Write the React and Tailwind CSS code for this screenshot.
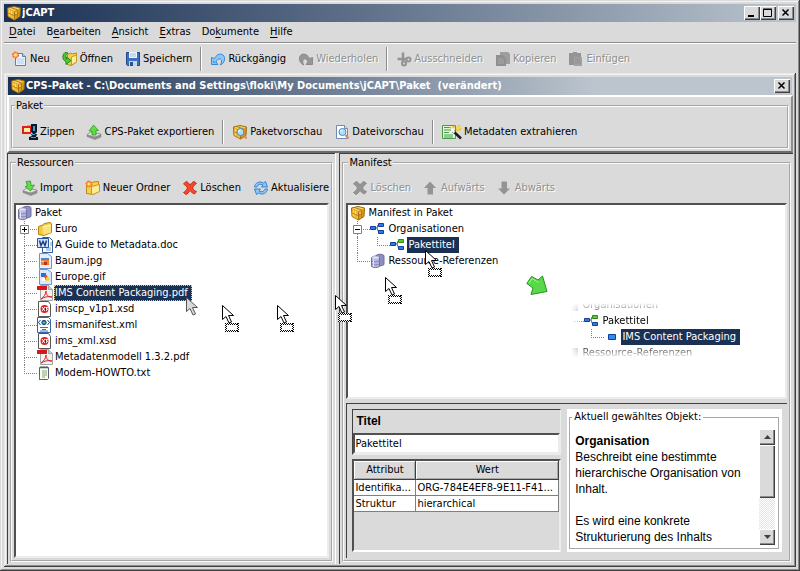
import clsx from "clsx";

/* ---------- icons ---------- */

function Icon({ children, w = 16, className }) {
  return (
    <svg
      width={w}
      height="16"
      viewBox={`0 0 ${w} 16`}
      aria-hidden="true"
      className={clsx("shrink-0", className)}
    >
      {children}
    </svg>
  );
}

function PackageShape() {
  return (
    <>
      <path d="M1.500 3 8 1.500 14.500 3 14 11.500 8.500 15 2 11.500z" fill="#dd9c18" stroke="#9a6a10" />
      <path d="M2 3.500 8 2l6 1.500L8.500 6z" fill="#f5d165" />
      <path d="M2 4 8 6.500v8L2.500 11.500z" fill="#edb93a" />
      <path d="M5 2.500 11.500 5v7.500" fill="none" stroke="#b17c14" />
      <path d="M2.500 8 8 10.500 14 8" fill="none" stroke="#b9831a" />
      <path d="M3.500 5.500v2M5.500 6v3M3.500 9.500v1.500M10 7v2" stroke="#fbe08a" />
      <path d="M8.500 6.500v8" stroke="#a8740e" />
    </>
  );
}

function Lens() {
  return (
    <>
      <circle cx="8.500" cy="8" r="3.500" fill="#a8e0f8" stroke="#5586b4" />
      <path d="M6.500 8a2 2 0 0 1 2-2" stroke="#fff" fill="none" />
      <path d="m11.500 11 3 3.500" stroke="#ee8148" strokeWidth="2" />
    </>
  );
}

function PageShape({ stroke = "#6f8ab8" }) {
  return (
    <>
      <path d="M2.500 1.500h8l3 3v10h-11z" fill="#fff" stroke={stroke} />
      <path d="M10.500 1.500v3h3" fill="#dbe6f5" stroke={stroke} />
    </>
  );
}

const PackageIcon = () => <Icon><PackageShape /></Icon>;

const NewIcon = () => (
  <Icon>
    <path d="M3.500 2.500h7l3 3v9h-10z" fill="#e9f1fc" stroke="#6480a8" />
    <path d="M10.500 2.500v3h3" fill="#b7cdea" stroke="#6480a8" />
    <path d="M5 8h7M5 10h7M5 12h7" stroke="#b8cdea" />
    <circle cx="3.500" cy="4" r="3" fill="#ff9a4a" stroke="#e8553a" strokeDasharray="2 1" />
    <circle cx="3.500" cy="4" r="1.500" fill="#ffec6a" />
  </Icon>
);

const OpenIcon = () => (
  <Icon>
    <path d="M5.500 3.500 9 2l1 1 4.500-1v9l-5 3.500-4-1z" fill="#f4d052" stroke="#b98b1a" />
    <path d="m9.500 6 5-2v7l-5 3z" fill="#fcef9c" stroke="#c49a26" />
    <path d="M3 1.500C0 4 0 9 4 10.500v3L9 9.500 4.500 6v2C3 7 3 4 6 2z" fill="#52c932" stroke="#258512" />
  </Icon>
);

const SaveIcon = () => (
  <Icon>
    <path d="M1.500 1.500h13v13h-12l-1-1z" fill="#3c6fbe" stroke="#23498a" />
    <path d="M4 1h8v6H4z" fill="#eef4fc" />
    <path d="M5 3h6M5 5h6" stroke="#a3bddf" />
    <path d="M4 10h8v5H4z" fill="#c9d6e8" />
    <path d="M5 11h3v4H5z" fill="#2a4f8f" />
  </Icon>
);

const UndoIcon = () => (
  <Icon>
    <path
      d="M1.500 6.500v7h6.500l-2-2.500c1-3 3.500-4 5-2.500 1 1 .5 3.500-.5 5.500 3-1.500 4.500-4.500 4-7.500C13.500 2.500 8 1 4.500 7.500z"
      fill="#8fc6f8"
      stroke="#3a86d2"
      strokeLinejoin="round"
    />
    <path d="M3 9v3h3z" fill="#4f9be6" />
  </Icon>
);

const RedoIcon = () => (
  <Icon>
    <path
      d="M14.500 6.500v7H8L10 11C9 8 6.500 7 5.500 8.500c-1 1-1 3 0 5.500-3-1.500-4.500-4.500-4-7.500C2.500 2.500 8 1 11.500 7.500z"
      fill="#969696"
      stroke="#8a8a8a"
      strokeLinejoin="round"
    />
  </Icon>
);

const CutIcon = () => (
  <Icon>
    <path d="M7 1.500V11M1.500 8H10" stroke="#949494" strokeWidth="2.500" />
    <circle cx="8" cy="12.500" r="2" fill="none" stroke="#949494" strokeWidth="2" />
    <circle cx="12.500" cy="8.500" r="2" fill="none" stroke="#949494" strokeWidth="2" />
  </Icon>
);

const CopyIcon = () => (
  <Icon>
    <path d="M5 1h8l2 2v10H5z" fill="#9e9e9e" />
    <path d="M1 4h7l3 3v8H1z" fill="#909090" />
    <path d="M3 8h5M3 10h6M3 12h6" stroke="#a8a8a8" />
  </Icon>
);

const PasteIcon = () => (
  <Icon>
    <path d="M1 2h4V1h4v1h4v12H1z" fill="#949494" />
    <path d="M6 6h8v9H6z" fill="#a2a2a2" />
    <path d="M7 8h5M7 10h6M7 12h6" stroke="#909090" />
  </Icon>
);

const ZipIcon = () => (
  <Icon>
    <path d="M5 1h10v6H5z" fill="#ff9d1c" />
    <path d="M0 2h9v8H0z" fill="#e31e1e" />
    <path d="M2 4h6v4H2z" fill="#fff29a" />
    <path d="M9 0h6v8l-2 2h2l-1 3h2v3H7v-3l3-1-1-2h2l-2-2z" fill="#101828" />
    <path d="M11 2h2v5h-2zM10 10h3v1h-3zM9 13h5v1H9z" fill="#3aa0d8" />
  </Icon>
);

function Tray() {
  return (
    <>
      <path d="M1 10.500 5 8l10 2v3l-6 2.500-8-3z" fill="#8f8f8f" stroke="#777" strokeWidth=".5" />
      <path d="m1.500 10.500 3.500-2 9.500 2-6 2z" fill="#e2e2e2" />
    </>
  );
}

const ExportIcon = () => (
  <Icon>
    <Tray />
    <path d="m7.500 1 5 5.500H10V11H6V7H3z" fill="#5fdc46" stroke="#2f9c25" strokeWidth=".8" />
  </Icon>
);

const ImportIcon = () => (
  <Icon>
    <Tray />
    <path d="m4 1.500 4.500-.5.5 4.500 3.500-.5L8.500 11 3 6.500l2.500-.5z" fill="#5fdc46" stroke="#2f9c25" strokeWidth=".8" />
  </Icon>
);

const PackageSearchIcon = () => <Icon><PackageShape /><Lens /></Icon>;
const FileSearchIcon = () => <Icon><PageShape /><Lens /></Icon>;

const MetadataIcon = () => (
  <Icon w={20}>
    <path d="M.5 1.500h13v13H.5z" fill="#e3f5dd" stroke="#4a9a4a" />
    <path d="M2 3.500h7M2 6h7M2 8.500h5M2 11h9M2 13h9" stroke="#3f9c44" />
    <path d="m11 7 8 7.500" stroke="#1b1b1b" strokeWidth="2.500" />
    <path d="m9.500 5.500 3 3" stroke="#fff" strokeWidth="2" />
    <path d="m8 3 1 1M16 1.500l2 2M14 6l5-1M11 2l1 2" stroke="#f0bf18" strokeWidth="2" />
    <circle cx="16" cy="4" r="2" fill="#fadb3b" />
  </Icon>
);

function FolderShape() {
  return (
    <>
      <path d="M1.500 5 6 4l2-2 5.500-.5v9l-5 4-7-1z" fill="#f6cf52" stroke="#bd8a14" />
      <path d="m6.500 6.500 8-2v7l-6.500 3-1.500-1z" fill="#fdeb95" stroke="#c8971c" />
    </>
  );
}

const FolderIcon = () => (
  <Icon>
    <path d="M1.500 5.500 6 4l1-1.500 6-1 1.500 1v9L7 14.500l-5.500-1z" fill="#f3c73e" stroke="#b58412" />
    <path d="m5.500 5 8.500-2v8.500L6 14z" fill="#fbe279" />
    <path d="m6 6 8-2" stroke="#fff6c4" />
  </Icon>
);

const NewFolderIcon = () => (
  <Icon>
    <FolderShape />
    <circle cx="4" cy="4" r="3" fill="#ff9a3a" stroke="#f0692e" strokeDasharray="2 1" />
    <circle cx="4" cy="4" r="1.300" fill="#fff07a" />
  </Icon>
);

function CrossIcon({ fill, stroke }) {
  return (
    <Icon>
      <path
        d="M4 1.500c1.500 0 3 2 4 3.500 1-1.500 2.500-3 4-3.500l2.500 2c-1.500 1-3 2.500-4 4.500 1 2 2.500 3 4 3.500L12.500 14c-1.500-.5-3-1.500-4.500-3.500-1.500 2-2.500 3.500-4 4L1.500 12.500C3 11.500 4.500 10 5.500 8 4.500 6 3 5 1.500 4z"
        fill={fill}
        stroke={stroke}
      />
    </Icon>
  );
}

const RefreshIcon = () => (
  <Icon>
    <path d="M1.500 7C2 3 6 .5 10.500 3L12.500 1.500 14.500 7H8.500L10 5C7 3.500 5 4.500 4 7z" fill="#8ec5f8" stroke="#3583d4" />
    <path d="M14.500 9c-.5 4-4.500 6.500-9 4l-2 1.500L1.500 9h6L6 11c3 1.500 5 .5 6-2z" fill="#8ec5f8" stroke="#3583d4" />
  </Icon>
);

const ArrowUpIcon = () => (
  <Icon>
    <path d="m7 1.500 6 6.500h-3v6.500H4.500V8H1z" fill="#949494" />
  </Icon>
);

const ArrowDownIcon = () => (
  <Icon>
    <path d="M7 14.500 1 8.500h3.500V1.500H10v7h3z" fill="#949494" />
  </Icon>
);

const DatabaseIcon = () => (
  <Icon>
    <path d="M6 2.500C8 .8 12.500.8 14 2.500v9c-2 1.500-5.500 2-8 1z" fill="#8e8ec2" stroke="#6c6ca4" />
    <path d="M1.500 4.500c2-2 6.500-2 8 0v9c-2 1.500-6 1.500-8 0z" fill="#b9b9de" stroke="#7070a8" />
    <ellipse cx="5.500" cy="4.500" rx="3.500" ry="1.200" fill="#dedef4" />
    <path d="M2 8c2 1.200 5 1.200 7 0M2 11c2 1.200 5 1.200 7 0" fill="none" stroke="#8080b4" />
    <path d="M3.500 6.500v7" stroke="#e6e6fa" />
  </Icon>
);

const WordIcon = () => (
  <Icon>
    <path d="M5.500.5h7l3 3v12h-10z" fill="#fff" stroke="#2f5da0" />
    <path d="M9 11h5M9 13h5M13 6h2M13 8h2" stroke="#6f97cf" />
    <path d="M.5 1.500h11v9H.5z" fill="#d4e2f6" stroke="#2a569c" />
    <path d="m2.500 3.500 1.500 5 2-4 2 4 1.500-5" fill="none" stroke="#173f88" strokeWidth="1.500" />
  </Icon>
);

const JpgIcon = () => (
  <Icon>
    <path d="M2.500.5h8l4 3v12h-12z" fill="#e6effb" stroke="#6b93cc" />
    <path d="M4 5h8v7H4z" fill="#f08232" />
    <path d="M4 5h8v2H4z" fill="#4a88cf" />
    <path d="M7 9h3v3H7z" fill="#b83418" />
    <path d="M4 8h3v1H4z" fill="#ffd064" />
  </Icon>
);

const GifIcon = () => (
  <Icon>
    <path d="M2.500.5h8l4 3v12h-12z" fill="#dbe9fb" stroke="#6b93cc" />
    <path d="M4 4h5v4H4z" fill="#276fe0" />
    <path d="m7 7 3-1 1 4-3 1z" fill="#ef4632" />
    <circle cx="10.500" cy="10" r="2" fill="#f3cf2c" />
    <path d="M5 9h3v3H5z" fill="#fff" />
  </Icon>
);

const PdfIcon = () => (
  <Icon>
    <path d="M3.500.5h8l4 4v11h-12z" fill="#f1f1f1" stroke="#a4a4a4" />
    <path d="M11.500.5v4h4" fill="#ccc" stroke="#a4a4a4" />
    <path d="M0 1h10v4H0z" fill="#d8141c" />
    <path d="M4 14c3-2 5-5 5-8 0 4 2 6 6 6-4-1-8 0-11 2z" fill="none" stroke="#dd2020" />
  </Icon>
);

const XsdIcon = () => (
  <Icon>
    <path d="M1.500.5h10l2 3v12h-12z" fill="#fff" stroke="#555" />
    <circle cx="7.500" cy="8" r="4" fill="#df2424" />
    <path d="m5 6 3 4M5 10l3-4M8.500 6.500h2L9 8h1.500L9 10" fill="none" stroke="#fff" />
    <path d="M8 7.500h1v2H8z" fill="#222" />
  </Icon>
);

const XmlIcon = () => (
  <Icon>
    <path d="M.5.5h11l2 2v13H.5z" fill="#fff" stroke="#36679f" />
    <path d="M3.500 3 1.500 5.500l2 2.500M10.500 3l2 2.500-2 2.500" fill="none" stroke="#184488" />
    <circle cx="7" cy="5.500" r="2.200" fill="#2f80d0" stroke="#154a88" />
    <path d="M6 5h2v1H6z" fill="#6cc35a" />
    <path d="M3 10.500h8M5 12.500h4M3 14h8" stroke="#4a6ea8" />
  </Icon>
);

const TxtIcon = () => (
  <Icon>
    <path d="M2.500 2.500h9v11l-1 1h-8z" fill="#f7fbf2" stroke="#56606e" />
    <path d="M4 1v2.500M6 1v2.500M8 1v2.500M10 1v2.500" stroke="#4b5563" />
    <path d="M5 6h5M5 8h5M5 10h5M5 12h3" stroke="#86a86a" />
    <path d="M2.500 10v4.500H6" fill="none" stroke="#4472b8" />
  </Icon>
);

function OrgIcon({ top = "#2f7bec", edge = "#123f9c" }) {
  return (
    <Icon>
      <path d="M5 7h2.500M10 4H8L7 7l1.500 4H10" fill="none" stroke="#666" />
      <path d="M.5 5.500h5v3h-5z" fill="#2f7bec" stroke="#123f9c" />
      <path d="M8.500 2.500h5v3h-5z" fill={top} stroke={edge} />
      <path d="M8.500 9.500h5v3h-5z" fill="#2f7bec" stroke="#123f9c" />
    </Icon>
  );
}

const ItemIcon = () => (
  <Icon>
    <path d="M4.500 5.500h7v5h-7z" fill="#2f8bf4" stroke="#123f9c" />
  </Icon>
);

const FadedPageIcon = () => (
  <Icon>
    <path d="M5 3h9v11H5z" fill="#8b8bb8" />
  </Icon>
);

/* ---------- window chrome ---------- */

const raised =
  "bg-[#dadada] shadow-[inset_1px_1px_0_#fff,inset_-1px_-1px_0_#404040,inset_-2px_-2px_0_#8c8c8c]";

function WindowButton({ label, children, className }) {
  return (
    <button aria-label={label} className={clsx("h-[14px] w-4", raised, className)}>
      <svg width="16" height="14" viewBox="0 0 16 14" fill="none" stroke="#000">
        {children}
      </svg>
    </button>
  );
}

const CloseX = () => <path d="m4.500 3.500 6 6M10.500 3.500l-6 6" strokeWidth="1.500" />;

function TitleBar({ title, children, className }) {
  return (
    <header
      className={clsx(
        "flex h-[18px] items-center bg-linear-to-r from-[#1b3153] to-[#bcc5ce] px-0.5 text-white",
        className
      )}
    >
      <PackageIcon />
      <h1 className="flex-1 truncate font-bold whitespace-pre">{title}</h1>
      {children}
    </header>
  );
}

function MenuItem({ before = "", hot, after }) {
  return (
    <button>
      {before}
      <u className="underline-offset-2">{hot}</u>
      {after}
    </button>
  );
}

function ToolButton({ icon, children, disabled }) {
  return (
    <button
      disabled={disabled}
      className="flex h-6 shrink-0 items-center gap-0.5 px-1.5 whitespace-nowrap disabled:text-[#8f8f8f] disabled:[text-shadow:1px_1px_0_#fff]"
    >
      {icon}
      {children}
    </button>
  );
}

const Separator = () => (
  <div className="mx-0.5 h-6 w-0.5 shrink-0 border-r border-l border-r-white border-l-[#8c8c8c]" />
);

function Group({ legend, className, children }) {
  return (
    <fieldset
      className={clsx("min-w-0 border-2 border-[#fbfbfb] [border-style:groove]", className)}
    >
      <legend className="ml-0.5 h-4 px-px leading-4">{legend}</legend>
      {children}
    </fieldset>
  );
}

/* ---------- trees ---------- */

const dots = "border-dotted border-[#808080]";

// one level of connector lines in front of a tree row
function Guide({ last, box }) {
  return (
    <span className="relative ml-[7px] flex h-4 w-[13px] flex-col">
      <span className={clsx("h-[9px] w-full border-b border-l", dots)} />
      {!last && <span className={clsx("h-[7px] border-l", dots)} />}
      {box && (
        <svg className="absolute top-1 -left-1" width="9" height="9" viewBox="0 0 9 9">
          <path d="M.5.5h8v8h-8z" fill="#fff" stroke="#808080" />
          <path d={box === "+" ? "M2 4.500h5M4.500 2v5" : "M2 4.500h5"} stroke="#000" />
        </svg>
      )}
    </span>
  );
}

function TreeRow({ icon, label, depth = 0, last, box, selected, focus, through }) {
  return (
    <li className="flex h-4 items-center whitespace-nowrap">
      {depth === 2 && (
        <span className={clsx("ml-[7px] h-4 w-[13px]", through && "border-l", through && dots)} />
      )}
      {depth > 0 && <Guide last={last} box={box} />}
      {icon}
      <span
        className={clsx(
          "ml-px h-4 pr-1 pl-px leading-4",
          selected && "bg-[#1b3153] text-white",
          focus && "outline outline-dotted -outline-offset-1 outline-[#d8c8a0]"
        )}
      >
        {label}
      </span>
    </li>
  );
}

const sunken =
  "border-2 border-t-[#505050] border-r-[#ececec] border-b-[#ececec] border-l-[#505050] bg-white";

const files = [
  { label: "Euro", icon: <FolderIcon />, box: "+" },
  { label: "A Guide to Metadata.doc", icon: <WordIcon /> },
  { label: "Baum.jpg", icon: <JpgIcon /> },
  { label: "Europe.gif", icon: <GifIcon /> },
  { label: "IMS Content Packaging.pdf", icon: <PdfIcon />, selected: true, focus: true },
  { label: "imscp_v1p1.xsd", icon: <XsdIcon /> },
  { label: "imsmanifest.xml", icon: <XmlIcon /> },
  { label: "ims_xml.xsd", icon: <XsdIcon /> },
  { label: "Metadatenmodell 1.3.2.pdf", icon: <PdfIcon /> },
  { label: "Modem-HOWTO.txt", icon: <TxtIcon />, last: true },
];

const greenOrg = <OrgIcon top="#5ccb30" edge="#2c8a14" />;

/* ---------- drag pointers ---------- */

const arrowPath = "M.5.5v14l3.500-3 3 6.500 2.500-1-3-6.500h5z";

function DragCursor({ className }) {
  return (
    <svg
      className={clsx("pointer-events-none absolute", className)}
      width="18"
      height="28"
      viewBox="0 0 18 28"
    >
      <path d={arrowPath} fill="#fff" stroke="#000" />
      <path d="M3 18h14v9H3z" fill="#fff" />
      <g fill="none" stroke="#000" shapeRendering="crispEdges" strokeDasharray="1 1">
        <path d="M3 18.500h14M3 26.500h14M3.500 18v9M16.500 18v9" />
        <path d="M4 19.500h12M4 25.500h12M4.500 19v7M15.500 19v7" />
      </g>
    </svg>
  );
}

function TitlePanel() {
  return (
    <div className="border border-t-[#404040] border-r-[#ececec] border-b-[#ececec] border-l-[#404040]">
      <label
        htmlFor="titel"
        className="block h-[23px] px-[3px] font-['Liberation_Sans',sans-serif] text-[12px] leading-[23px] font-bold"
      >
        Titel
      </label>
      <input
        id="titel"
        defaultValue="Pakettitel"
        className={clsx("block h-[21px] w-full outline-none", sunken)}
      />
    </div>
  );
}

function AttributeTable() {
  const th =
    "h-[19px] border-r border-b border-[#404040] p-0 text-center font-normal shadow-[inset_1px_1px_0_#fff,inset_-1px_-1px_0_#a8a8a8]";
  const td =
    "h-4 border-r border-b border-[#808080] bg-white p-0 pl-px leading-[15px] whitespace-nowrap";
  return (
    <div className="flex-1 border-2 border-t-[#505050] border-r-[#ececec] border-b-white border-l-[#505050]">
      <table className="w-full table-fixed border-separate border-spacing-0">
        <thead>
          <tr>
            <th className={clsx("w-[62px]", th)}>Attribut</th>
            <th className={th}>Wert</th>
          </tr>
        </thead>
        <tbody>
          <tr>
            <td className={td}>Identifika...</td>
            <td className={td}>ORG-784E4EF8-9E11-F41...</td>
          </tr>
          <tr>
            <td className={td}>Struktur</td>
            <td className={td}>hierarchical</td>
          </tr>
        </tbody>
      </table>
    </div>
  );
}

function ScrollBar() {
  return (
    <div className="mt-1 flex w-4 shrink-0 flex-col bg-[repeating-conic-gradient(#e4e4e4_0_25%,#fff_0_50%)] bg-[length:2px_2px]">
      <button aria-label="Nach oben" className={clsx("flex h-4 items-center justify-center", raised)}>
        <svg width="7" height="4"><path d="M0 4 3.500 0 7 4z" fill="#404040" /></svg>
      </button>
      <div className={clsx("h-[53px]", raised)} />
      <div className="flex-1" />
      <button aria-label="Nach unten" className={clsx("flex h-4 items-center justify-center", raised)}>
        <svg width="7" height="4"><path d="M0 0h7L3.500 4z" fill="#404040" /></svg>
      </button>
    </div>
  );
}

function Description() {
  return (
    <div className="flex bg-white px-0.5 pb-[3px]">
      <fieldset className="mr-px min-w-0 flex-1 border border-[#a8a8a8]">
        <legend className="ml-0.5 h-4 px-0.5 leading-4">Aktuell gewähltes Objekt:</legend>
        <div className="flex pr-[3px] pb-[3px] pl-[5px]">
          <div className="h-[120px] flex-1 overflow-hidden pt-2 font-['Liberation_Sans',sans-serif] text-[12px] leading-4">
            <h2 className="font-bold">Organisation</h2>
            <p>Beschreibt eine bestimmte hierarchische Organisation von Inhalt.</p>
            <p className="mt-4">Es wird eine konkrete Strukturierung des Inhalts</p>
          </div>
          <ScrollBar />
        </div>
      </fieldset>
    </div>
  );
}

export default function App() {
  return (
    <div className="relative flex min-h-screen flex-col bg-[#dadada] p-1 font-['DejaVu_Sans_Condensed','DejaVu_Sans',sans-serif] text-[11px] leading-4 text-black shadow-[inset_-1px_-1px_0_#404040,inset_1px_1px_0_#dadada,inset_-2px_-2px_0_#8c8c8c,inset_2px_2px_0_#f4f4f4]">
      <TitleBar title="jCAPT">
        <div className="flex">
          <WindowButton label="Minimieren">
            <path d="M4 10h6" strokeWidth="2" />
          </WindowButton>
          <WindowButton label="Maximieren">
            <path d="M3.500 3.500h8v7h-8zM3 3h9" />
          </WindowButton>
          <WindowButton label="Schließen" className="ml-0.5">
            <CloseX />
          </WindowButton>
        </div>
      </TitleBar>

      <nav className="flex h-[21px] items-center gap-[11px] border-b border-[#8c8c8c] pl-[5px]">
        <MenuItem hot="D" after="atei" />
        <MenuItem before="B" hot="e" after="arbeiten" />
        <MenuItem hot="A" after="nsicht" />
        <MenuItem hot="E" after="xtras" />
        <MenuItem before="Do" hot="k" after="umente" />
        <MenuItem hot="H" after="ilfe" />
      </nav>

      <div className="flex h-[30px] items-center border-t border-white pl-0.5">
        <ToolButton icon={<NewIcon />}>Neu</ToolButton>
        <ToolButton icon={<OpenIcon />}>Öffnen</ToolButton>
        <ToolButton icon={<SaveIcon />}>Speichern</ToolButton>
        <Separator />
        <ToolButton icon={<UndoIcon />}>Rückgängig</ToolButton>
        <ToolButton disabled icon={<RedoIcon />}>Wiederholen</ToolButton>
        <Separator />
        <ToolButton disabled icon={<CutIcon />}>Ausschneiden</ToolButton>
        <ToolButton disabled icon={<CopyIcon />}>Kopieren</ToolButton>
        <ToolButton disabled icon={<PasteIcon />}>Einfügen</ToolButton>
      </div>

      <section className="flex flex-1 flex-col px-[3px] pt-1 pb-[3px] shadow-[inset_-1px_-1px_0_#404040,inset_1px_1px_0_#e8e8e8,inset_-2px_-2px_0_#8c8c8c,inset_2px_2px_0_#f4f4f4]">
        <TitleBar
          className="mx-px to-75%"
          title={"CPS-Paket - C:\\Documents and Settings\\floki\\My Documents\\jCAPT\\Paket  (verändert)"}
        >
          <WindowButton label="Paket schließen">
            <CloseX />
          </WindowButton>
        </TitleBar>

        <div className="border-2 border-t-white border-r-[#8c8c8c] border-b-[#6c6c6c] border-l-white px-0.5 pt-px pb-0.5">
          <Group legend="Paket">
            <div className="flex h-[33px] items-center pt-0.5 pl-[3px]">
              <ToolButton icon={<ZipIcon />}>Zippen</ToolButton>
              <ToolButton icon={<ExportIcon />}>CPS-Paket exportieren</ToolButton>
              <Separator />
              <ToolButton icon={<PackageSearchIcon />}>Paketvorschau</ToolButton>
              <ToolButton icon={<FileSearchIcon />}>Dateivorschau</ToolButton>
              <Separator />
              <ToolButton icon={<MetadataIcon />}>Metadaten extrahieren</ToolButton>
            </div>
          </Group>
        </div>

        <main className="grid flex-1 grid-cols-[42fr_58fr] gap-1">
          <section className="flex min-w-0 border-t border-l border-[#404040] p-0.5 pt-px shadow-[1px_0_0_#fff]">
            <Group legend="Ressourcen" className="flex flex-1 flex-col px-[2px] pb-[2px]">
              <div className="flex h-8 items-center pt-0.5 pl-0.5">
                <ToolButton icon={<ImportIcon />}>Import</ToolButton>
                <ToolButton icon={<NewFolderIcon />}>Neuer Ordner</ToolButton>
                <ToolButton icon={<CrossIcon fill="#f4482c" stroke="#cf2a18" />}>Löschen</ToolButton>
                <ToolButton icon={<RefreshIcon />}>Aktualisiere</ToolButton>
              </div>
              <ul className={clsx("flex-1 overflow-hidden pl-px", sunken)}>
                <TreeRow icon={<DatabaseIcon />} label="Paket" />
                {files.map((f) => (
                  <TreeRow key={f.label} depth={1} {...f} />
                ))}
              </ul>
            </Group>
          </section>

          <section className="flex min-w-0 border-t border-l border-[#404040] p-0.5 pt-px">
            <Group legend="Manifest" className="flex flex-1 flex-col px-[2px] pb-[2px]">
              <div className="flex h-8 items-center pt-0.5">
                <ToolButton disabled icon={<CrossIcon fill="#949494" stroke="#8c8c8c" />}>
                  Löschen
                </ToolButton>
                <ToolButton disabled icon={<ArrowUpIcon />}>Aufwärts</ToolButton>
                <ToolButton disabled icon={<ArrowDownIcon />}>Abwärts</ToolButton>
              </div>

              <div className={clsx("relative flex-1 overflow-hidden pl-0.5", sunken)}>
                <ul>
                  <TreeRow icon={<PackageIcon />} label="Manifest in Paket" />
                  <TreeRow depth={1} box="-" icon={<OrgIcon />} label="Organisationen" />
                  <TreeRow depth={2} through last selected icon={greenOrg} label="Pakettitel" />
                  <TreeRow depth={1} last icon={<DatabaseIcon />} label="Ressource-Referenzen" />
                </ul>

                <svg className="absolute top-[70px] left-[178px]" width="22" height="21" viewBox="0 0 22 21">
                  <path
                    d="M.8 8.500 5.500 1.500 12 5l4.500-4 4.500 15.500L5 19.500l2-6.500z"
                    fill="#58d948"
                    stroke="#25911f"
                    strokeLinejoin="round"
                  />
                  <path d="m3 8 3-4.500 6.500 4" fill="none" stroke="#a8f49c" />
                </svg>

                {/* tree after the drop, fading out at its edges */}
                <ul className="absolute top-[92px] left-[216px] [mask-image:linear-gradient(transparent_6px,black_18px,black_48px,transparent_61px),linear-gradient(to_right,transparent_7px,black_20px)] [mask-composite:intersect]">
                  <li className="flex h-4 items-center gap-0.5">
                    <FadedPageIcon />
                    <span>Organisationen</span>
                  </li>
                  <TreeRow depth={1} last icon={greenOrg} label="Pakettitel" />
                  <TreeRow depth={2} last selected icon={<ItemIcon />} label="IMS Content Packaging" />
                  <li className="flex h-4 items-center gap-0.5">
                    <FadedPageIcon />
                    <span>Ressource-Referenzen</span>
                  </li>
                </ul>
              </div>

              <div className="mt-1 grid grid-cols-[208fr_214fr] gap-1.5 border-t border-l border-[#404040] p-[5px] pb-1.5">
                <div className="flex min-w-0 flex-col gap-1">
                  <TitlePanel />
                  <AttributeTable />
                </div>
                <Description />
              </div>
            </Group>
          </section>
        </main>
      </section>

      {/* pointer trail of the drag */}
      <svg className="pointer-events-none absolute top-[297px] left-[186px]" width="13" height="19" viewBox="0 0 13 19">
        <path d={arrowPath} fill="#dadada" stroke="#555" />
      </svg>
      <DragCursor className="top-[305px] left-[222px]" />
      <DragCursor className="top-[305px] left-[277px]" />
      <DragCursor className="top-[295px] left-[335px]" />
      <DragCursor className="top-[277px] left-[385px]" />
      <DragCursor className="top-[250px] left-[425px]" />
    </div>
  );
}
